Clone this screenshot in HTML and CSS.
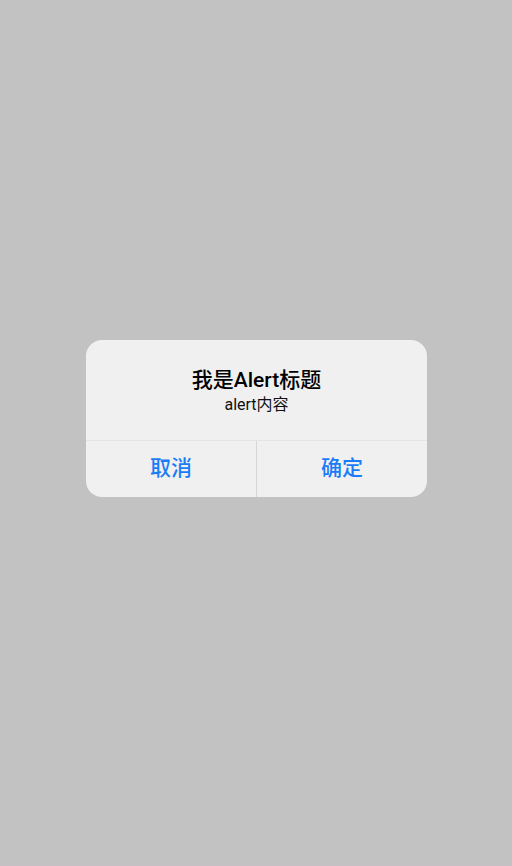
FILE: index.html
```html
<!DOCTYPE html>
<html>
<head>
<meta charset="utf-8">
<link rel="stylesheet" href="styles.css">
</head>
<body>
<div class="dialog">
  <div class="body">
    <div class="title">我是Alert标题</div>
    <div class="message">alert内容</div>
  </div>
  <div class="actions">
    <div class="btn">取消</div>
    <div class="btn">确定</div>
  </div>
</div>
</body>
</html>
```
FILE: styles.css
```css
html, body {
  margin: 0;
  padding: 0;
  background: #c2c2c2;
  height: 100%;
}
body {
  padding-top: 340px;
  box-sizing: border-box;
  font-family: Roboto, "Noto Sans CJK SC", sans-serif;
}
.dialog {
  width: 341px;
  margin-left: 86px;
  background: #f0f0f0;
  border-radius: 16px;
  overflow: hidden;
}
.body {
  padding: 26px 16px 25px;
  text-align: center;
}
.title {
  font-size: 21px;
  font-weight: 500;
  line-height: 28px;
  color: #000;
}
.message {
  font-size: 16px;
  line-height: 20px;
  margin-top: 1px;
  color: #111;
}
.actions {
  display: flex;
  border-top: 1px solid #e4e4e4;
  height: 56px;
}
.btn {
  flex: 1;
  display: flex;
  align-items: center;
  justify-content: center;
  font-size: 21px;
  font-weight: 500;
  color: #1a7cf7;
  padding-bottom: 6px;
}
.btn + .btn {
  border-left: 1px solid #d6d6d6;
}
```
